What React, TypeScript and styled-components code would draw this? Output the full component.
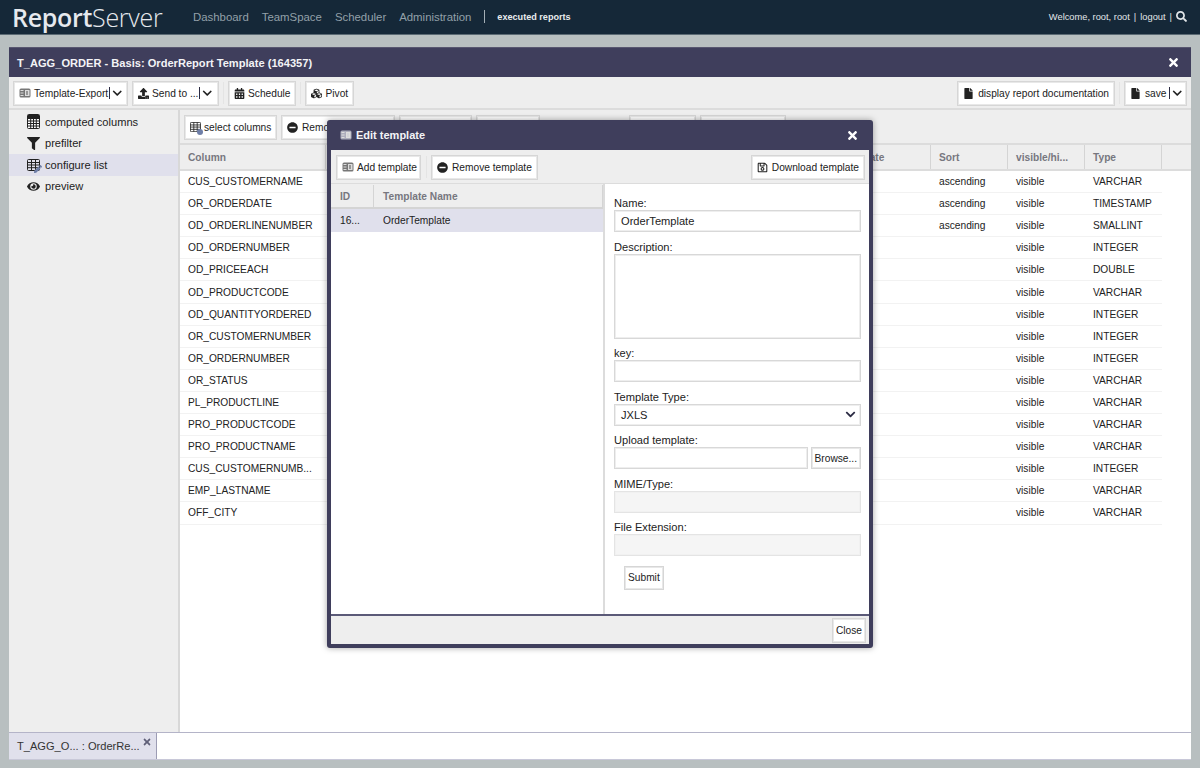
import * as React from 'react'
import styled, { createGlobalStyle } from 'styled-components'
import {
  FaCalendarAlt,
  FaChevronDown,
  FaCubes,
  FaEye,
  FaFile,
  FaFilter,
  FaMinusCircle,
  FaPen,
  FaRegSave,
  FaSearch,
  FaTimes,
  FaUpload,
} from 'react-icons/fa'

const GlobalStyle = createGlobalStyle`
  html, body {
    margin: 0;
    padding: 0;
    height: 100%;
    overflow: hidden;
    background: #b8bfc0;
    font-family: 'Liberation Sans', Arial, sans-serif;
    font-size: 11px;
    color: #222;
  }
  * { box-sizing: border-box; }
`

const Page = styled.div`
  position: relative;
  display: flex;
  flex-direction: column;
  width: 1200px;
  height: 768px;
  overflow: hidden;
`

const Header = styled.header`
  display: flex;
  align-items: center;
  flex: none;
  height: 35px;
  padding: 0 13px 1px 12px;
  background: #152838;
  border-bottom: 1px solid #5b6a74;
`

const Logo = styled.div`
  width: 181px;
  font-family: 'Open Sans', sans-serif;
  font-size: 25px;
  line-height: 34px;
  font-weight: 400;
  letter-spacing: -0.3px;
  color: #e6e9ee;
  b { font-weight: 600; }
  span { font-weight: 300; }
`

const Nav = styled.nav`
  display: flex;
  align-items: center;
  gap: 13px;
`

const NavLink = styled.a`
  font-size: 11.4px;
  color: #93a0a9;
`

const NavDivider = styled.span`
  width: 1px;
  height: 13px;
  margin-right: -1px;
  background: #a4afb6;
`

const Executed = styled.a`
  font-size: 9.1px;
  font-weight: 700;
  color: #e8ecee;
`

const UserBox = styled.div`
  display: flex;
  align-items: center;
  gap: 4px;
  margin-left: auto;
  font-size: 9.3px;
  color: #e2e6e9;
  svg { font-size: 11px; }
`

const Window = styled.main`
  flex: 1;
  display: flex;
  flex-direction: column;
  margin: 12px 9px 8px;
  min-height: 0;
`

const TitleBar = styled.div`
  display: flex;
  align-items: center;
  justify-content: space-between;
  flex: none;
  height: 30px;
  padding: 0 11px 0 8px;
  background: #3f3e5c;
  border-top: 1px solid #57566f;
  font-size: 11.1px;
  font-weight: 700;
  color: #f3f3f6;
  svg { font-size: 13px; color: #fff; }
`

const Toolbar = styled.div<{ $height: number }>`
  display: flex;
  align-items: center;
  gap: 4px;
  flex: none;
  height: ${p => p.$height}px;
  padding: 1px 4px 0;
  background: #eeeeee;
  border-bottom: 2px solid #dcdcdc;
`

const Button = styled.button<{ $height?: number; $width?: number; $gap?: number; $pad?: number }>`
  display: inline-flex;
  align-items: center;
  gap: ${p => p.$gap ?? 4}px;
  height: ${p => p.$height || 25}px;
  width: ${p => (p.$width ? `${p.$width}px` : 'auto')};
  padding: 0 ${p => p.$pad ?? 5}px;
  background: #fff;
  border: 1px solid #d6d6d6;
  outline: 1px solid #e8e8e8;
  outline-offset: -2px;
  border-radius: 0;
  font-family: inherit;
  font-size: 10.2px;
  color: #222;
  white-space: nowrap;
  overflow: hidden;
  flex: none;
  svg { font-size: 11px; flex: none; }
`

const Caret = styled.span`
  display: inline-flex;
  align-items: center;
  gap: 2px;
  margin-left: -2px;
  &::before {
    content: '';
    width: 1px;
    height: 12px;
    background: #2c2c44;
  }
  svg { font-size: 10.5px; }
`

const Separator = styled.span`
  width: 1px;
  height: 22px;
  background: #e4e4e4;
  flex: none;
`

const Spacer = styled.span<{ $width?: number }>`
  flex: ${p => (p.$width ? 'none' : 1)};
  width: ${p => p.$width || 0}px;
`

const Body = styled.div`
  flex: 1;
  display: flex;
  min-height: 0;
`

const Sidebar = styled.aside`
  flex: none;
  width: 171px;
  padding-top: 1px;
  background: #eeeeee;
  border-right: 2px solid #d8d8d8;
`

const SideItem = styled.div<{ $active?: boolean }>`
  position: relative;
  display: flex;
  align-items: center;
  height: 21.5px;
  padding-left: 18px;
  gap: 5px;
  font-size: 11.1px;
  color: #222;
  background: ${p => (p.$active ? '#e0e0ec' : 'transparent')};
  svg { font-size: 13px; width: 13px; flex: none; }
`

const PenBadge = styled.span`
  position: absolute;
  left: 25px;
  top: 11px;
  line-height: 0;
  color: #6f7fa8;
  svg { font-size: 8px; width: 8px; }
`

const Content = styled.section`
  flex: 1;
  display: flex;
  flex-direction: column;
  min-width: 0;
`

const SelectBadge = styled.span`
  position: relative;
  display: inline-flex;
  &::after {
    content: '';
    position: absolute;
    right: -2px;
    bottom: -3px;
    width: 6px;
    height: 6px;
    border-radius: 50%;
    background: #6f7fa8;
  }
`

const TableGrid = styled.div`
  flex: 1;
  background: #fff;
  overflow: hidden;
`

const Row = styled.div<{ $head?: boolean }>`
  display: flex;
  height: ${p => (p.$head ? 26 : 22.1)}px;
  background: ${p => (p.$head ? '#eeeeee' : '#fff')};
  border-bottom: ${p => (p.$head ? '2px solid #dcdcdc' : 'none')};
`

const Cell = styled.div<{ $w: number; $head?: boolean }>`
  flex: none;
  display: flex;
  align-items: center;
  width: ${p => p.$w}px;
  padding-left: 8px;
  overflow: hidden;
  white-space: nowrap;
  font-size: 10.2px;
  color: ${p => (p.$head ? '#77777f' : '#222')};
  font-weight: ${p => (p.$head ? 700 : 400)};
  border-right: ${p => (p.$head ? '1px solid #d4d4d4' : 'none')};
  border-bottom: ${p => (p.$head ? 'none' : '1px solid #f2f2f2')};
`

const BottomBar = styled.div`
  display: flex;
  flex: none;
  height: 28px;
  background: #fff;
  border-top: 1px solid #b4b4c8;
  border-bottom: 1px solid #c8c8d8;
`

const Tab = styled.div`
  position: relative;
  display: flex;
  align-items: center;
  width: 148px;
  padding-left: 8px;
  background: #e0e0ec;
  border-right: 1px solid #9c9cb4;
  font-size: 11.1px;
  color: #333;
`

const TabClose = styled.span`
  position: absolute;
  right: 4px;
  top: 4px;
  line-height: 0;
  color: #5f5f78;
  svg { font-size: 10px; }
`

const Modal = styled.div`
  position: absolute;
  left: 327px;
  top: 120px;
  display: flex;
  flex-direction: column;
  width: 546px;
  height: 528px;
  background: #3f3e5c;
  border-radius: 3px;
  padding: 0 4px 4px;
  box-shadow: 0 0 6px rgba(0, 0, 0, 0.35);
`

const ModalTitle = styled.div`
  display: flex;
  align-items: center;
  gap: 4px;
  flex: none;
  height: 30px;
  padding: 0 10px 0 9px;
  font-size: 11px;
  font-weight: 700;
  color: #f3f3f6;
  svg { flex: none; }
`

const ModalClose = styled.span`
  margin-left: auto;
  line-height: 0;
  svg { font-size: 13px; color: #fff; }
`

const ModalToolbar = styled.div`
  display: flex;
  align-items: center;
  gap: 4.5px;
  flex: none;
  height: 34px;
  padding: 1px 4px 0 5px;
  background: #eeeeee;
  border-bottom: 1px solid #dcdcdc;
`

const ModalBody = styled.div`
  flex: 1;
  display: flex;
  min-height: 0;
  background: #fff;
`

const ListPane = styled.div`
  flex: none;
  width: 274px;
  border-right: 2px solid #dcdcdc;
`

const ListHead = styled.div`
  display: flex;
  height: 25px;
  padding-top: 1px;
  background: #eeeeee;
  border-bottom: 2px solid #d4d4d4;
`

const ListRow = styled.div`
  display: flex;
  align-items: center;
  height: 23px;
  background: #e0e0ec;
`

const ListCell = styled.div<{ $w: number; $head?: boolean }>`
  display: flex;
  align-items: center;
  align-self: stretch;
  width: ${p => p.$w}px;
  padding-left: 9px;
  font-size: 10.2px;
  color: ${p => (p.$head ? '#77777f' : '#222')};
  font-weight: ${p => (p.$head ? 700 : 400)};
  border-right: ${p => (p.$head ? '1px solid #d4d4d4' : 'none')};
`

const FormPane = styled.form`
  flex: 1;
  display: flex;
  flex-direction: column;
  gap: 7.5px;
  padding: 12px 8px 0 9px;
`

const Field = styled.label`
  display: flex;
  flex-direction: column;
`

const FieldLabel = styled.span`
  height: 14px;
  line-height: 14px;
  font-size: 11.1px;
  color: #222;
`

const Input = styled.div<{ $height?: number; $disabled?: boolean; $grow?: boolean }>`
  display: flex;
  align-items: center;
  justify-content: space-between;
  flex: ${p => (p.$grow ? 1 : 'none')};
  height: ${p => p.$height || 22}px;
  padding: 0 6px;
  background: ${p => (p.$disabled ? '#f5f5f5' : '#fff')};
  border: 1px solid ${p => (p.$disabled ? '#e4e4e4' : '#d8d8d8')};
  outline: 1px solid ${p => (p.$disabled ? '#f1f1f1' : '#eeeeee')};
  outline-offset: -2px;
  font-size: 11.1px;
  color: #222;
  svg { font-size: 11px; color: #2c2c44; margin-right: -2px; }
`

const FileRow = styled.div`
  display: flex;
  gap: 3px;
`

const SubmitWrap = styled.div`
  padding: 2px 0 0 10px;
`

const ModalFooter = styled.div`
  display: flex;
  align-items: center;
  justify-content: flex-end;
  flex: none;
  height: 30px;
  padding-right: 3px;
  background: #eeeeee;
  border-top: 2px solid #5b5a78;
`

// icons that the packages draw too differently
const TemplateIcon = ({ color = '#555' }: { color?: string }) => (
  <svg width="12" height="10" viewBox="0 0 12 10">
    <rect x="0.5" y="0.5" width="11" height="9" rx="1.5" fill={color} opacity="0.8" />
    <rect x="1.5" y="2" width="3" height="1" fill="#ddd" />
    <rect x="1.5" y="4.5" width="3" height="1" fill="#ddd" />
    <rect x="1.5" y="7" width="3" height="1" fill="#ddd" />
    <rect x="6" y="2" width="4.5" height="6" fill="#ddd" />
    <rect x="7.5" y="3" width="1" height="4" fill={color} />
  </svg>
)

const GridIcon = ({ width = 13 }: { width?: number }) => (
  <svg width={width} height={(width * 12) / 13} viewBox="0 0 13 12" fill="none" stroke="#222" strokeWidth="1">
    <rect x="0.5" y="0.5" width="12" height="11" rx="1" />
    <path d="M0.5 3.5H12.5M0.5 6H12.5M0.5 8.7H12.5M4.5 0.5V11.5M8.5 0.5V11.5" />
  </svg>
)

const CalcIcon = () => (
  <svg width="13" height="15" viewBox="0 0 13 15">
    <rect x="0.5" y="0.5" width="12" height="14" rx="1" fill="#fff" stroke="#222" />
    <rect x="1" y="1" width="11" height="4" fill="#222" />
    <path d="M1 7H12M1 9.5H12M1 12H12M3.7 5V14M6.5 5V14M9.3 5V14" stroke="#222" fill="none" />
  </svg>
)

const columns = [
  { name: 'Column', width: 146 },
  { name: '', width: 500 },
  { name: 'Aggregate', width: 105 },
  { name: 'Sort', width: 77 },
  { name: 'visible/hi...', width: 77 },
  { name: 'Type', width: 77 },
]

const rows = [
  ['CUS_CUSTOMERNAME', 'ascending', 'VARCHAR'],
  ['OR_ORDERDATE', 'ascending', 'TIMESTAMP'],
  ['OD_ORDERLINENUMBER', 'ascending', 'SMALLINT'],
  ['OD_ORDERNUMBER', '', 'INTEGER'],
  ['OD_PRICEEACH', '', 'DOUBLE'],
  ['OD_PRODUCTCODE', '', 'VARCHAR'],
  ['OD_QUANTITYORDERED', '', 'INTEGER'],
  ['OR_CUSTOMERNUMBER', '', 'INTEGER'],
  ['OR_ORDERNUMBER', '', 'INTEGER'],
  ['OR_STATUS', '', 'VARCHAR'],
  ['PL_PRODUCTLINE', '', 'VARCHAR'],
  ['PRO_PRODUCTCODE', '', 'VARCHAR'],
  ['PRO_PRODUCTNAME', '', 'VARCHAR'],
  ['CUS_CUSTOMERNUMB...', '', 'INTEGER'],
  ['EMP_LASTNAME', '', 'VARCHAR'],
  ['OFF_CITY', '', 'VARCHAR'],
]

const EditTemplate = () => (
  <Modal>
    <ModalTitle>
      <TemplateIcon color="#c9c9d4" />
      Edit template
      <ModalClose>
        <FaTimes />
      </ModalClose>
    </ModalTitle>
    <ModalToolbar>
      <Button $gap={3} $width={85}>
        <TemplateIcon />
        Add template
      </Button>
      <Separator />
      <Button>
        <FaMinusCircle />
        Remove template
      </Button>
      <Spacer />
      <Button>
        <FaRegSave />
        Download template
      </Button>
    </ModalToolbar>
    <ModalBody>
      <ListPane>
        <ListHead>
          <ListCell $w={43} $head>ID</ListCell>
          <ListCell $w={229} $head>Template Name</ListCell>
        </ListHead>
        <ListRow>
          <ListCell $w={43}>16...</ListCell>
          <ListCell $w={229}>OrderTemplate</ListCell>
        </ListRow>
      </ListPane>
      <FormPane>
        <Field>
          <FieldLabel>Name:</FieldLabel>
          <Input>OrderTemplate</Input>
        </Field>
        <Field>
          <FieldLabel>Description:</FieldLabel>
          <Input $height={85} />
        </Field>
        <Field>
          <FieldLabel>key:</FieldLabel>
          <Input />
        </Field>
        <Field>
          <FieldLabel>Template Type:</FieldLabel>
          <Input>
            JXLS
            <FaChevronDown />
          </Input>
        </Field>
        <Field>
          <FieldLabel>Upload template:</FieldLabel>
          <FileRow>
            <Input $grow />
            <Button $height={22} $pad={3}>Browse...</Button>
          </FileRow>
        </Field>
        <Field>
          <FieldLabel>MIME/Type:</FieldLabel>
          <Input $disabled />
        </Field>
        <Field>
          <FieldLabel>File Extension:</FieldLabel>
          <Input $disabled />
        </Field>
        <SubmitWrap>
          <Button $height={24} $pad={3}>Submit</Button>
        </SubmitWrap>
      </FormPane>
    </ModalBody>
    <ModalFooter>
      <Button $pad={3}>Close</Button>
    </ModalFooter>
  </Modal>
)

export default function App() {
  return (
    <Page>
      <GlobalStyle />
      <Header>
        <Logo>
          <b>Report</b>
          <span>Server</span>
        </Logo>
        <Nav>
          <NavLink>Dashboard</NavLink>
          <NavLink>TeamSpace</NavLink>
          <NavLink>Scheduler</NavLink>
          <NavLink>Administration</NavLink>
          <NavDivider />
          <Executed>executed reports</Executed>
        </Nav>
        <UserBox>
          <span>Welcome, root, root</span>
          <span>|</span>
          <span>logout</span>
          <span>|</span>
          <FaSearch />
        </UserBox>
      </Header>
      <Window>
        <TitleBar>
          T_AGG_ORDER - Basis: OrderReport Template (164357)
          <FaTimes />
        </TitleBar>
        <Toolbar $height={33}>
          <Button $width={115} $gap={3}>
            <TemplateIcon />
            Template-Export
            <Caret><FaChevronDown /></Caret>
          </Button>
          <Button $width={87} $gap={3}>
            <FaUpload />
            Send to ...
            <Caret><FaChevronDown /></Caret>
          </Button>
          <Separator />
          <Button $gap={3}>
            <FaCalendarAlt />
            Schedule
          </Button>
          <Separator />
          <Button $gap={3}>
            <FaCubes />
            Pivot
          </Button>
          <Spacer />
          <Button>
            <FaFile />
            display report documentation
          </Button>
          <Separator />
          <Button $width={63}>
            <FaFile />
            save
            <Caret><FaChevronDown /></Caret>
          </Button>
        </Toolbar>
        <Body>
          <Sidebar>
            <SideItem>
              <CalcIcon />
              computed columns
            </SideItem>
            <SideItem>
              <FaFilter />
              prefilter
            </SideItem>
            <SideItem $active>
              <GridIcon />
              configure list
              <PenBadge><FaPen /></PenBadge>
            </SideItem>
            <SideItem>
              <FaEye />
              preview
            </SideItem>
          </Sidebar>
          <Content>
            <Toolbar $height={35}>
              <Button $width={93} $gap={3}>
                <SelectBadge><GridIcon width={11} /></SelectBadge>
                select columns
              </Button>
              <Button $width={114}>
                <FaMinusCircle />
                Remove columns
              </Button>
              <Button $width={73} />
              <Button $width={64} />
              <Spacer $width={81} />
              <Button $width={67} />
              <Button $width={86} />
            </Toolbar>
            <TableGrid>
              <Row $head>
                {columns.map(c => (
                  <Cell key={c.name || 'blank'} $w={c.width} $head>
                    {c.name}
                  </Cell>
                ))}
              </Row>
              {rows.map(r => (
                <Row key={r[0]}>
                  <Cell $w={646}>{r[0]}</Cell>
                  <Cell $w={105} />
                  <Cell $w={77}>{r[1]}</Cell>
                  <Cell $w={77}>visible</Cell>
                  <Cell $w={77}>{r[2]}</Cell>
                </Row>
              ))}
            </TableGrid>
          </Content>
        </Body>
        <BottomBar>
          <Tab>
            T_AGG_O... : OrderRe...
            <TabClose><FaTimes /></TabClose>
          </Tab>
        </BottomBar>
      </Window>
      <EditTemplate />
    </Page>
  )
}
